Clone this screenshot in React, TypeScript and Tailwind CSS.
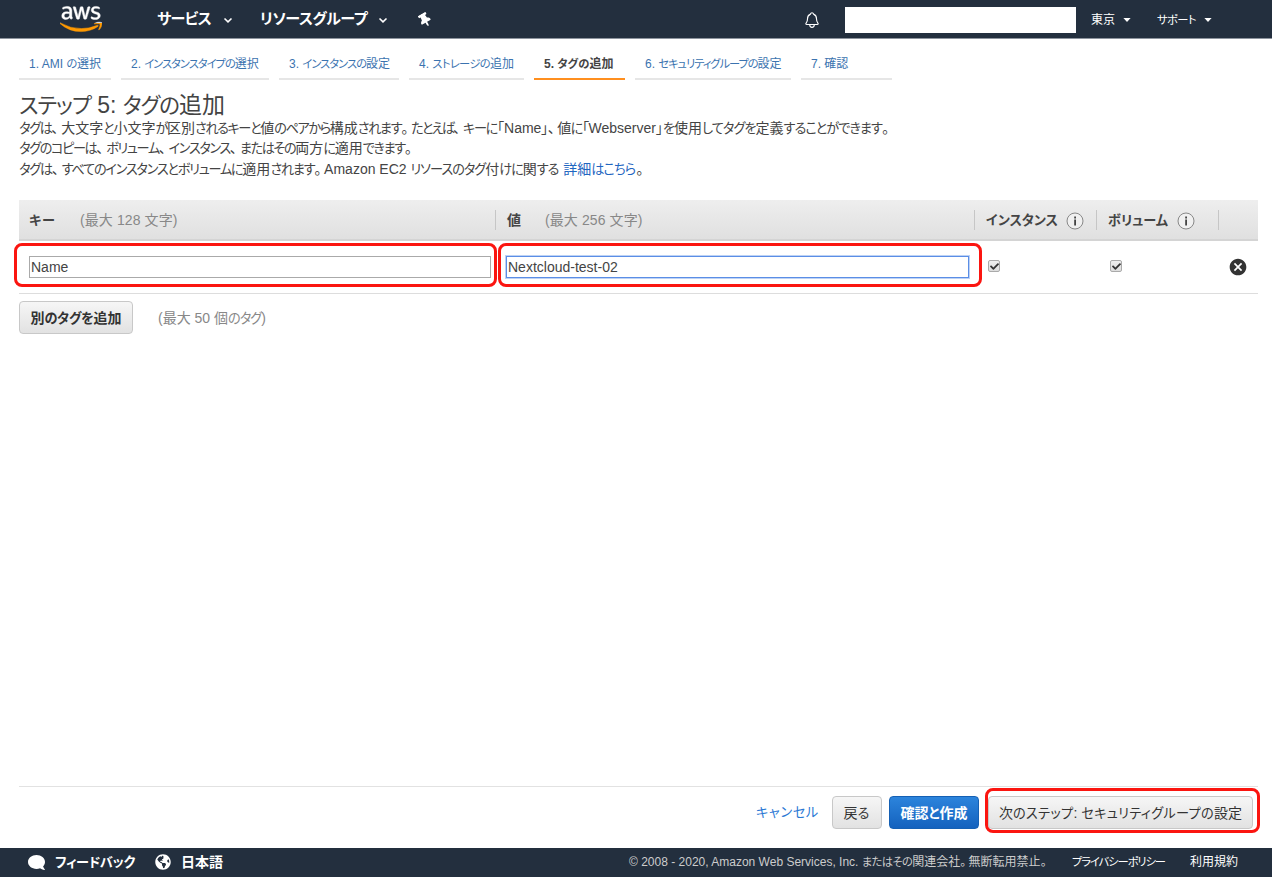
import { FaAws, FaThumbtack, FaComment, FaGlobeAmericas, FaCheck } from "react-icons/fa";
import { IoNotificationsOutline } from "react-icons/io5";
import { MdCancel } from "react-icons/md";

/** Japanese text whose kana are set slightly narrower than the kanji; `k` is the kana tracking. */
function Ja({ k = "", c = "", children }: { k?: string; c?: string; children: string }) {
  return (
    <span className={"whitespace-pre " + c}>
      {children.split(/([ぁ-ヺー]+|[、。])/).map((s, i) => {
        if (/^[ぁ-ヺー]/.test(s)) return <span key={i} className={"text-[0.94em] leading-none " + k}>{s}</span>;
        if (/^[、。]/.test(s)) return <span key={i} className="mr-[0.2em]">{s}</span>;
        return s;
      })}
    </span>
  );
}
function Chevron({ c }: { c: string }) {
  return <svg className={"size-[10px] " + c} viewBox="0 0 10 10"><path d="M1.5 3.5 5 6.8 8.5 3.5" fill="none" stroke="#fff" strokeWidth="1.6" /></svg>;
}
function Caret() {
  return <svg className="size-2" viewBox="0 0 8 8"><path d="M0.4 2h7.2L4 6z" fill="#fff" /></svg>;
}
function Info({ c }: { c: string }) {
  return (
    <svg className={"size-[18px] " + c} viewBox="0 0 18 18">
      <circle cx="9" cy="9" r="8" fill="#f0f0f0" stroke="#888" />
      <path d="M8.2 4.6h1.8v1.8H8.2zM8.2 7.6H10v5.8H8.2z" fill="#444" />
    </svg>
  );
}
function Check() {
  return (
    <span className="mb-0.5 flex size-3 items-center justify-center rounded-[2px] border border-[#aaa] bg-linear-to-b from-[#eee] to-[#ddd]">
      <FaCheck className="size-[9px] shrink-0 text-[#333]" />
    </span>
  );
}
function Highlight({ c }: { c: string }) {
  return <span className={"pointer-events-none absolute rounded-lg border-3 border-[#fb1510] " + c} />;
}
const steps: { label: string; box: string; k: string }[] = [
  { label: "1. AMI の選択", box: "w-[92px]", k: "tracking-[-0.25px]" },
  { label: "2. インスタンスタイプの選択", box: "w-[148px]", k: "tracking-[-1.02px]" },
  { label: "3. インスタンスの設定", box: "w-[120px]", k: "tracking-[-0.97px]" },
  { label: "4. ストレージの追加", box: "w-[115px]", k: "tracking-[-0.64px]" },
  { label: "5. タグの追加", box: "w-[91px]", k: "tracking-[0px]" },
  { label: "6. セキュリティグループの設定", box: "w-[156px]", k: "tracking-[-1.05px]" },
  { label: "7. 確認", box: "w-[91px]", k: "" },
];
const greyButton = "flex h-[33px] items-center justify-center rounded border border-[#c8c8c8] bg-linear-to-b from-[#f6f6f6] to-[#e2e2e2]";

export default function App() {
  return (
    <div className="flex h-[877px] w-[1272px] flex-col overflow-hidden bg-white font-['Liberation_Sans','Noto_Sans_CJK_JP',sans-serif] text-sm text-[#444] [font-feature-settings:'palt']">
      <header className="flex h-[39px] shrink-0 items-center border-b border-[#8d949e] bg-[#232f3e] pt-[2px] leading-5 whitespace-nowrap text-white">
        <svg className="size-0" aria-hidden="true">
          <linearGradient id="aws" gradientUnits="userSpaceOnUse" x1="0" y1="0" x2="0" y2="512">
            <stop offset="0.63" stopColor="#fff" />
            <stop offset="0.63" stopColor="#ff9900" />
          </linearGradient>
        </svg>
        <FaAws fill="url(#aws)" stroke="url(#aws)" strokeWidth="7" className="-mt-[3px] ml-[60px] size-[42px] shrink-0" />
        <div className="-mt-[2px] ml-[55px] w-[66px] text-base font-bold"><Ja k="tracking-[-0.7px]">サービス</Ja></div>
        <Chevron c="" />
        <div className="-mt-[2px] ml-[27px] w-[112px] text-base font-bold"><Ja k="tracking-[-0.49px]">リソースグループ</Ja></div>
        <Chevron c="ml-[6px]" />
        <FaThumbtack className="-mt-px ml-[30px] size-[14px] -rotate-30" />
        <IoNotificationsOutline className="ml-[371px] size-[18px]" />
        <div className="ml-6 h-[26px] w-[231px] bg-white" />
        <div className="ml-[15px] w-[32px] text-xs">東京</div>
        <Caret />
        <div className="ml-[26px] w-[47px] text-xs"><Ja k="tracking-[-0.56px]">サポート</Ja></div>
        <Caret />
      </header>
      <nav className="mt-[13px] flex gap-[10px] pl-[19px] text-xs leading-[24px] whitespace-nowrap">
        {steps.map((s, i) => (
          <span key={s.label} className={"h-7 border-b-2 pl-[10px] " + s.box + (i === 4 ? " border-[#ff8f1f] font-bold" : " border-[#e6e6e6] text-[#3b73af]")}>
            <Ja k={s.k}>{s.label}</Ja>
          </span>
        ))}
      </nav>
      <h1 className="mt-[10px] ml-[19px] h-7 text-[23px] leading-[30px]"><Ja k="tracking-[-1.03px]">ステップ 5: タグの追加</Ja></h1>
      <div className="ml-[19px] h-[62px] leading-[20.4px] whitespace-nowrap">
        <p>
          <Ja k="tracking-[-1.38px]">タグは、大文字と小文字が区別されるキーと値のペアから構成されます。</Ja>
          <Ja k="tracking-[-1.77px]">たとえば、</Ja>
          <Ja k="tracking-[-1.32px]">キーに「</Ja>Name
          <Ja k="tracking-[-1.4px]" c="tracking-[-0.5px]">」、値に「</Ja>Webserver
          <Ja k="tracking-[-0.98px]">」を使用してタグを定義することができます。</Ja>
        </p>
        <p><Ja k="tracking-[-1.37px]">タグのコピーは、ボリューム、インスタンス、またはその両方に適用できます。</Ja></p>
        <p>
          <Ja k="tracking-[-1.25px]">タグは、すべてのインスタンスとボリュームに適用されます。</Ja>
          Amazon EC2 <Ja k="tracking-[-1.02px]">リソースのタグ付けに関する</Ja>{" "}
          <a className="ml-px text-[#1f66c1]"><Ja k="tracking-[-0.85px]">詳細はこちら</Ja></a><span className="ml-px">。</span>
        </p>
      </div>

      <section className="mt-[20px] ml-[19px] w-[1239px] whitespace-nowrap">
        <div className="flex h-[41px] items-center border-b-2 border-[#d4d4d4] bg-linear-to-b from-[#eee] to-[#e0e0e0] leading-5">
          <div className="flex w-[476px] pl-[10px]">
            <b className="w-[51px]"><Ja k="tracking-[1.09px]">キー</Ja></b>
            <span className="tracking-[0.1px] text-[#888]">(最大 128 文字)</span>
          </div>
          <div className="flex w-[479px] border-l border-[#c6c6c6] pl-[11px]">
            <b className="w-[38px]">値</b>
            <span className="tracking-[0.1px] text-[#888]">(最大 256 文字)</span>
          </div>
          <div className="flex w-[122px] border-l border-[#c6c6c6] pl-[11px]">
            <b><Ja>インスタンス</Ja></b><Info c="ml-2 mt-[2px]" />
          </div>
          <div className="flex w-[122px] border-l border-[#c6c6c6] pl-[11px]">
            <b><Ja>ボリューム</Ja></b><Info c="ml-[9px] mt-[2px]" />
          </div>
          <div className="h-5 w-10 border-l border-[#c6c6c6]" />
        </div>
        <div className="flex h-[53px] items-center border-b border-[#ddd]">
          <div className="relative w-[477px] pl-[10px]">
            <div className="h-[22px] w-[462px] border border-[#aaa] pl-px leading-5">Name</div>
            <Highlight c="-top-[13px] -left-[5px] h-[44px] w-[483px]" />
          </div>
          <div className="relative w-[492px] pl-[10px]">
            <div className="h-[22px] w-[463px] border border-[#5b8ee6] pl-px leading-5 ring-1 ring-[#5b8ee6]/40">Nextcloud-test-02</div>
            <Highlight c="-top-[13px] left-[2px] h-[44px] w-[484px]" />
          </div>
          <div className="w-[122px]"><Check /></div>
          <div className="w-[118px]"><Check /></div>
          <MdCancel className="size-5 text-[#333]" />
        </div>
        <div className="mt-[7px] flex items-center leading-5">
          <span className={greyButton + " w-[114px] font-bold text-[#333]"}><Ja k="tracking-[-0.27px]">別のタグを追加</Ja></span>
          <span className="ml-[25px] text-[#888]"><Ja k="tracking-[-0.93px]">(最大 50 個のタグ)</Ja></span>
        </div>
      </section>

      <section className="mt-auto mr-[14px] ml-[19px] flex h-[62px] shrink-0 justify-end border-t border-[#e2e2e2] pt-[9px] whitespace-nowrap text-[#333]">
        <a className="mr-[13px] leading-[32px] text-[#2a78d4]"><Ja k="tracking-[0.68px]">キャンセル</Ja></a>
        <span className={greyButton + " mr-[7px] w-[50px]"}><Ja k="tracking-[1px]">戻る</Ja></span>
        <span className="mr-[9px] flex h-[33px] w-[90px] items-center justify-center rounded border border-[#1560b4] bg-linear-to-b from-[#2c84dc] to-[#1462be] font-bold text-white"><Ja>確認と作成</Ja></span>
        <span className={greyButton + " relative mr-[5px] w-[265px]"}>
          <Ja k="tracking-[0.32px]">次のステップ: セキュリティグループの設定</Ja>
          <Highlight c="-top-[9px] -left-[4px] h-[45px] w-[275px]" />
        </span>
      </section>
      <footer className="flex h-[29px] shrink-0 items-center bg-[#232f3e] pb-px text-xs leading-5 whitespace-nowrap text-white">
        <FaComment className="ml-[28px] size-[17px] -scale-x-100" />
        <b className="ml-[10px] w-[100px] text-sm"><Ja k="tracking-[-0.3px]">フィードバック</Ja></b>
        <FaGlobeAmericas className="size-4" />
        <b className="ml-[10px] w-[448px] text-sm">日本語</b>
        <span className="w-[443px] text-[#ccc]">© 2008 - 2020, Amazon Web Services, Inc. <Ja k="tracking-[-0.6px]">またはその関連会社。無断転用禁止。</Ja></span>
        <span className="w-[118px]"><Ja k="tracking-[-1.06px]">プライバシーポリシー</Ja></span>
        <span>利用規約</span>
      </footer>
    </div>
  );
}
